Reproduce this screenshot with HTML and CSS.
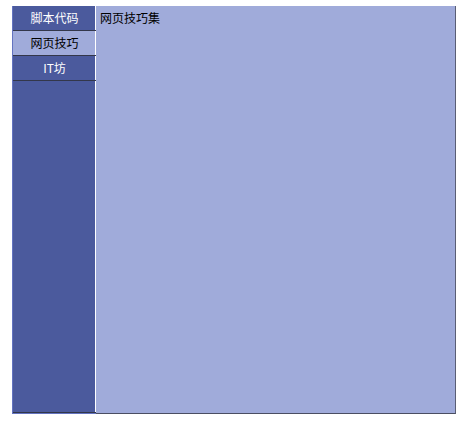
FILE: index.html
```html
<!DOCTYPE html>
<html>
<head>
<meta charset="utf-8">
<link rel="stylesheet" href="styles.css">
</head>
<body>
<div class="frame">
  <div class="side">
    <div class="item">脚本代码</div>
    <div class="item active">网页技巧</div>
    <div class="item">IT坊</div>
    <div class="fill"></div>
  </div>
  <div class="main">网页技巧集</div>
</div>
</body>
</html>
```
FILE: styles.css
```css
html, body {
  margin: 0;
  padding: 0;
  background: #ffffff;
}
body {
  font-family: "Noto Sans CJK SC", "DejaVu Sans", sans-serif;
  font-size: 12px;
}
.frame {
  margin: 6px 0 0 12px;
  width: 444px;
  height: 408px;
  display: grid;
  grid-template-columns: 84px 360px;
}
.side {
  display: flex;
  flex-direction: column;
  background: #4b5a9d;
  border-left: 1px solid #6373c0;
  border-bottom: 1px solid #6373c0;
}
.item {
  height: 24px;
  line-height: 24px;
  text-align: center;
  color: #ffffff;
  border-bottom: 1px solid #33374a;
  box-shadow: inset -1px 0 0 #ffffff;
}
.item.active {
  background: #a0abda;
  color: #000000;
}
.fill {
  flex: 1;
  border-bottom: 1px solid #33374a;
  box-shadow: inset -1px 0 0 #ffffff;
}
.main {
  background: #a0abda;
  color: #000000;
  padding: 0 4px;
  line-height: 24px;
  border-right: 1px solid #5a5e74;
  border-bottom: 1px solid #4a4e62;
}
```
